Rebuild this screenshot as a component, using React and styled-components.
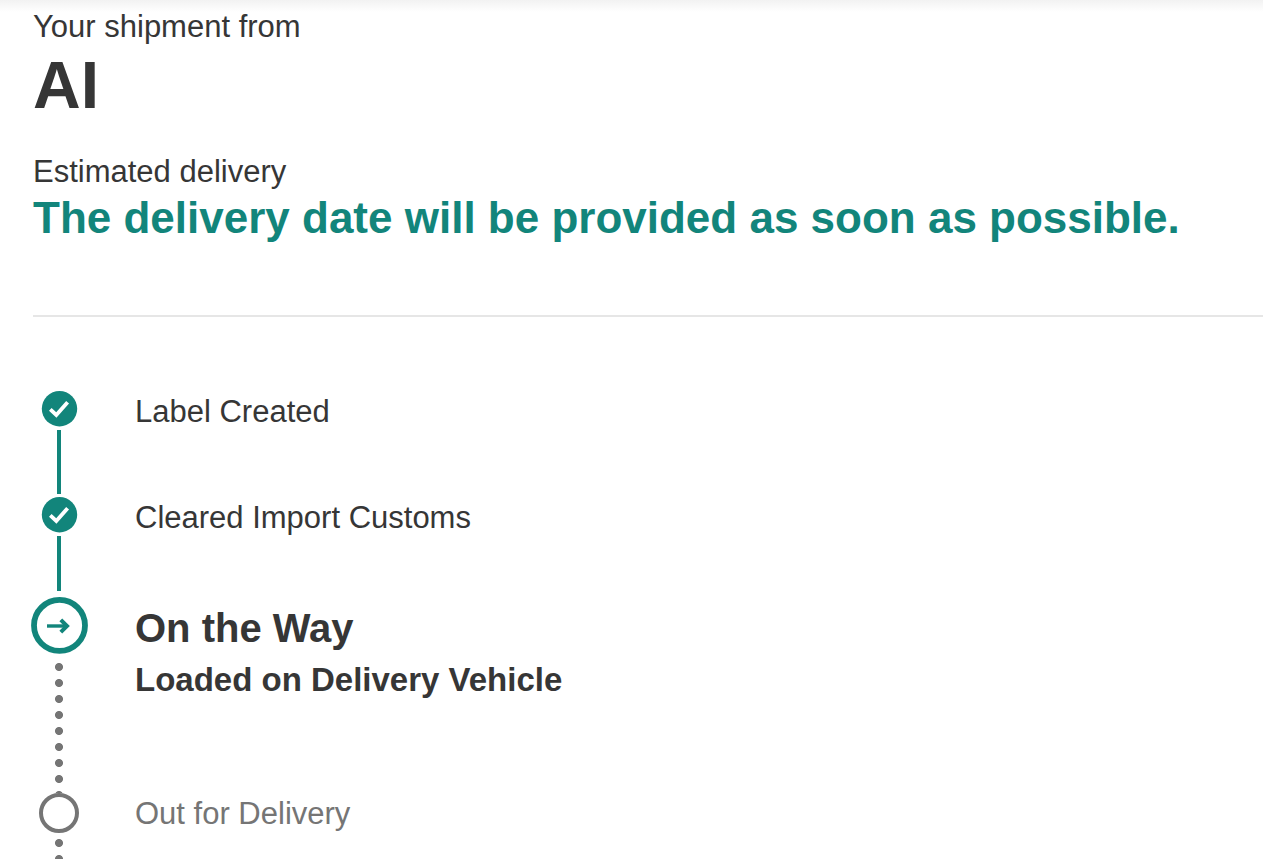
import React from 'react'
import styled, { createGlobalStyle } from 'styled-components'

const teal = '#12857b'
const grey = '#757575'
const dark = '#363636'

const GlobalStyle = createGlobalStyle`
  body {
    margin: 0;
    background: #fff;
    color: ${dark};
    font-family: "Liberation Sans", Arial, Helvetica, sans-serif;
  }
`

const Page = styled.main`
  padding-top: 7px;
  background: linear-gradient(#f2f2f2, #fff 12px) no-repeat;
`

const Summary = styled.header`
  margin-left: 33px;
  padding-bottom: 71px;
  border-bottom: 2px solid #e6e6e6;
`

const Caption = styled.p`
  margin: 0;
  font-size: 31px;
  line-height: 40px;
`

const Sender = styled.h1`
  margin: 0 0 29px;
  font-size: 66px;
  line-height: 76px;
`

const Estimate = styled.h2`
  margin: 0;
  font-size: 44px;
  line-height: 52px;
  color: ${teal};
`

const Steps = styled.ol`
  margin: 74px 0 0;
  padding: 0 0 0 30px;
  list-style: none;
`

const Step = styled.li`
  display: grid;
  grid-template-columns: 58px 1fr;
  column-gap: 47px;
  min-height: ${props => props.$height}px;
  color: ${props => props.$pending ? grey : dark};
`

const Track = styled.div`
  display: flex;
  flex-direction: column;
  align-items: center;

  svg {
    display: block;
    flex: none;
  }
`

const Line = styled.span`
  flex: 1;
  width: 4px;
  margin: 3px 0 ${props => props.$end}px;
  background: ${teal};
`

const Dots = styled.span`
  flex: 1;
  width: 8px;
  margin-top: ${props => props.$start}px;
  background: radial-gradient(circle at 4px 4px, ${grey} 3.6px, transparent 4.4px) 0 0 / 8px 16px repeat-y;
`

const Details = styled.div`
  padding-top: ${props => props.$current ? 7 : 1}px;
`

const StepTitle = styled.h3`
  margin: 0 0 8px;
  font-size: 40px;
  line-height: 48px;
`

const StepStatus = styled.p`
  margin: 0;
  font-size: 33px;
  line-height: 40px;
  font-weight: bold;
`

const DoneIcon = () =>
  <svg width='38' height='36' viewBox='0 0 38 36' fill='none' aria-hidden='true'>
    <circle cx='19.5' cy='17.7' r='17.7' fill={teal} />
    <path d='M10.3 18.4L16.3 24L27.6 11.2' stroke='#fff' strokeWidth='3.8' />
  </svg>

const CurrentIcon = () =>
  <svg width='58' height='57' viewBox='0 0 58 57' fill='none' stroke={teal} aria-hidden='true'>
    <circle cx='29.5' cy='28.4' r='25.5' strokeWidth='5.8' />
    <path d='M17 29H37' strokeWidth='3.4' />
    <path d='M30.8 22.8L37 29L30.8 35.2' strokeWidth='4' />
  </svg>

const PendingIcon = () =>
  <svg width='40' height='40' viewBox='0 0 40 40' aria-hidden='true'>
    <circle cx='20' cy='20' r='18' fill='#fff' stroke={grey} strokeWidth='4' />
  </svg>

const App = () =>
  <Page>
    <GlobalStyle />
    <Summary>
      <Caption>Your shipment from</Caption>
      <Sender>AI</Sender>
      <Caption>Estimated delivery</Caption>
      <Estimate>The delivery date will be provided as soon as possible.</Estimate>
    </Summary>
    <Steps>
      <Step $height={106}>
        <Track><DoneIcon /><Line $end={3} /></Track>
        <Details><Caption>Label Created</Caption></Details>
      </Step>
      <Step $height={100}>
        <Track><DoneIcon /><Line $end={6} /></Track>
        <Details><Caption>Cleared Import Customs</Caption></Details>
      </Step>
      <Step $height={196} aria-current='step'>
        <Track><CurrentIcon /><Dots $start={9} /></Track>
        <Details $current>
          <StepTitle>On the Way</StepTitle>
          <StepStatus>Loaded on Delivery Vehicle</StepStatus>
        </Details>
      </Step>
      <Step $height={66} $pending>
        <Track><PendingIcon /><Dots $start={6} /></Track>
        <Details><Caption>Out for Delivery</Caption></Details>
      </Step>
    </Steps>
  </Page>

export default App
